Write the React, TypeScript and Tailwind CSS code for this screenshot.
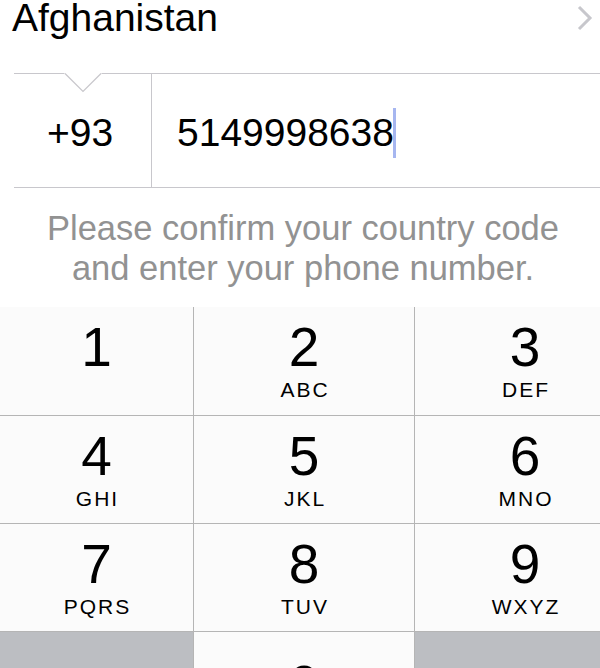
const keys = [
  { digit: "1", letters: "" },
  { digit: "2", letters: "ABC" },
  { digit: "3", letters: "DEF" },
  { digit: "4", letters: "GHI" },
  { digit: "5", letters: "JKL" },
  { digit: "6", letters: "MNO" },
  { digit: "7", letters: "PQRS" },
  { digit: "8", letters: "TUV" },
  { digit: "9", letters: "WXYZ" },
];

function Key({ digit, letters, col }: { digit: string; letters: string; col: number }) {
  const border =
    col === 0
      ? "w-[194px] border-r"
      : col === 1
      ? "w-[221px] border-r"
      : "w-[220px]";
  return (
    <div className={`${border} border-[#b5b5b5] flex flex-col items-center pt-[13px]`}>
      <span className="text-[55px] leading-none text-black">{digit}</span>
      {letters && (
        <span className="mt-[4px] pl-[2px] text-[21px] leading-none tracking-[2px] text-black">
          {letters}
        </span>
      )}
    </div>
  );
}

export default function App() {
  const rows = [keys.slice(0, 3), keys.slice(3, 6), keys.slice(6, 9)];

  return (
    <div className="w-[600px] h-[668px] overflow-hidden bg-white font-['Liberation_Sans',Arial,sans-serif]">
      <div className="ml-[14px]">
        {/* country */}
        <div className="h-[74px] border-b border-[#c8c7cc] flex justify-between pr-[7px]">
          <span className="-ml-[2px] -mt-[2px] text-[39px] leading-[39px] text-black">
            Afghanistan
          </span>
          <svg width="16" height="26" viewBox="0 0 16 26" className="mt-[5px]">
            <polyline
              points="2,2 13,13 2,24"
              fill="none"
              stroke="#c7c7cc"
              strokeWidth="3"
            />
          </svg>
        </div>

        {/* phone */}
        <div className="relative h-[114px] border-b border-[#c8c7cc] flex">
          <svg
            width="38"
            height="20"
            viewBox="0 0 38 20"
            className="absolute left-[50px] top-[-1px]"
          >
            <polygon points="0,0 38,0 19,19" fill="white" />
            <polyline
              points="1,0.5 19,18.5 37,0.5"
              fill="none"
              stroke="#c8c7cc"
              strokeWidth="1.2"
            />
          </svg>
          <div className="w-[138px] border-r border-[#c8c7cc] flex items-center justify-center pt-[4px] pr-[5px]">
            <span className="text-[39px] leading-none text-black">+93</span>
          </div>
          <div className="flex-1 flex items-center pl-[25px] pt-[4px]">
            <span className="text-[39px] leading-none text-black">5149998638</span>
            <span className="ml-[-1px] w-[3px] h-[50px] bg-[#a6b6f0]" />
          </div>
        </div>
      </div>

      <p className="mt-[21px] pl-[6px] text-center text-[34.5px] leading-[39.5px] text-[#929292]">
        Please confirm your country code
        <br />
        and enter your phone number.
      </p>

      {/* keypad */}
      <div className="mt-[19px] w-[635px] bg-[#fbfbfb]">
        {rows.map((row, i) => (
          <div
            key={i}
            className={`flex border-b border-[#b5b5b5] ${i === 0 ? "h-[109px]" : "h-[108px]"}`}
          >
            {row.map((k, j) => (
              <Key key={k.digit} digit={k.digit} letters={k.letters} col={j} />
            ))}
          </div>
        ))}
        <div className="flex h-[108px]">
          <div className="w-[194px] border-r border-[#b5b5b5] bg-[#bcbec2]" />
          <div className="w-[221px] border-r border-[#b5b5b5] flex justify-center pt-[26px]">
            <span className="text-[55px] leading-none text-black">0</span>
          </div>
          <div className="w-[220px] bg-[#bcbec2]" />
        </div>
      </div>
    </div>
  );
}
